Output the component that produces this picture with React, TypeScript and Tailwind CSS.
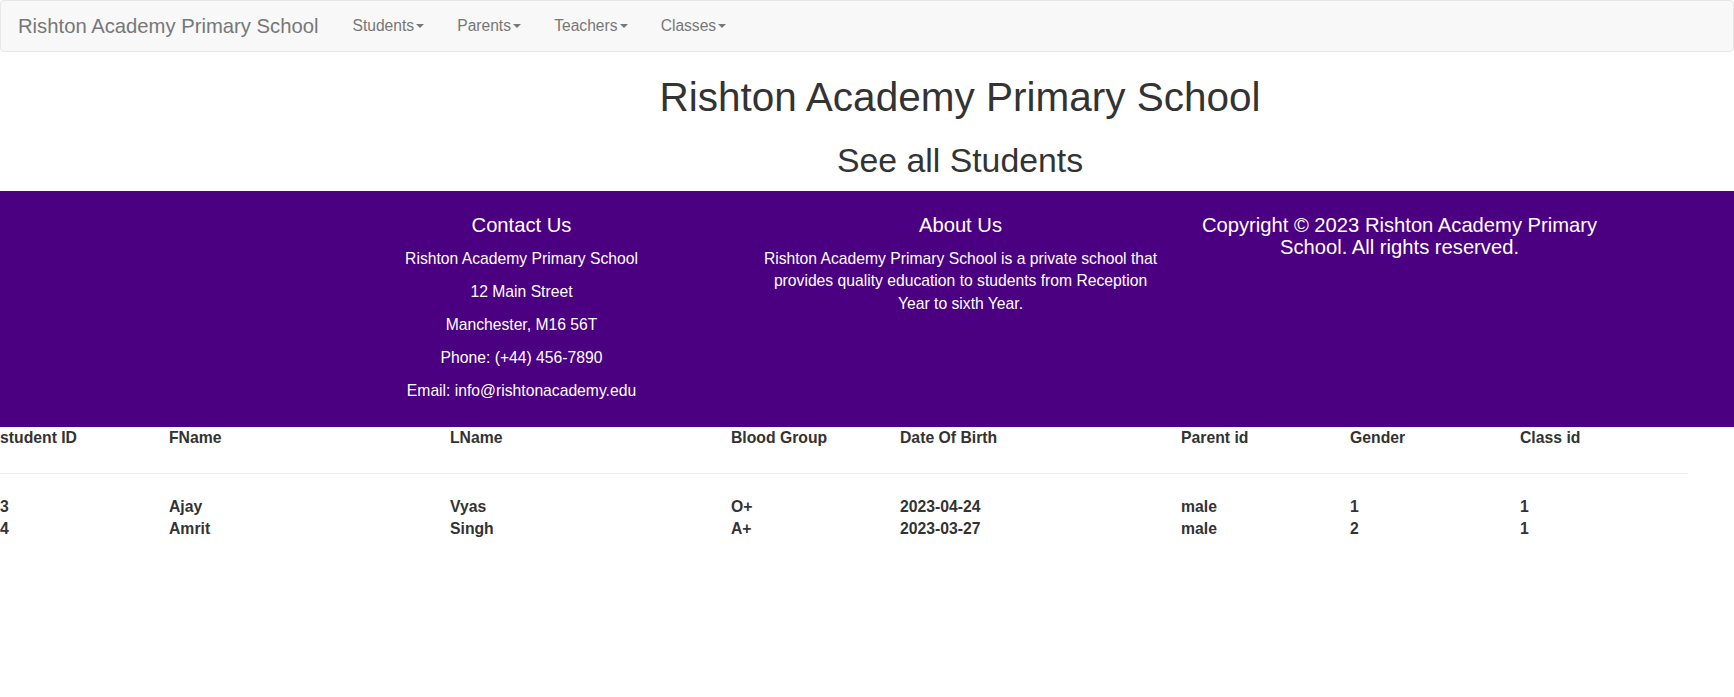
import React from "react";

const navItems = ["Students", "Parents", "Teachers", "Classes"];

const headers = ["student ID", "FName", "LName", "Blood Group", "Date Of Birth", "Parent id", "Gender", "Class id"];
const rows = [
  ["3", "Ajay", "Vyas", "O+", "2023-04-24", "male", "1", "1"],
  ["4", "Amrit", "Singh", "A+", "2023-03-27", "male", "2", "1"],
];

const cols = "grid grid-cols-[169px_281px_281px_169px_281px_169px_170px_168px] w-[1688px]";

export default function App() {
  return (
    <div className="min-h-[697px] bg-white text-[#333] font-['Liberation_Sans',Arial,sans-serif]">
      {/* Navbar */}
      <nav className="h-[52px] w-full bg-[#f8f8f8] border border-[#e7e7e7] rounded-[4px] flex items-center">
        <div className="pl-[17px] pr-[34px] text-[20.25px] leading-[22px] text-[#777]">Rishton Academy Primary School</div>
        <div className="flex items-center">
          {navItems.map((n) => (
            <div key={n} className="px-[16.5px] text-[15.6px] leading-[22px] text-[#777] flex items-center first:pl-0">
              <span>{n}</span>
              <span className="ml-[2.2px] inline-block w-0 h-0 border-t-[4.4px] border-t-[#777] border-l-[4.4px] border-l-transparent border-r-[4.4px] border-r-transparent" />
            </div>
          ))}
        </div>
      </nav>

      {/* Titles */}
      <div className="pl-[186px] text-center">
        <h1 className="mt-[24px] text-[40.5px] leading-[43.56px] font-normal">Rishton Academy Primary School</h1>
        <h2 className="mt-[22px] mb-[13px] text-[33.8px] leading-[36.3px] font-normal">See all Students</h2>
      </div>

      {/* Footer */}
      <footer className="bg-[#4b0082] text-white pt-[24px] pb-[14px]">
        <div className="ml-[302px] w-[1317px] grid grid-cols-3">
          <div className="px-[15px] text-center">
            <h4 className="text-[20.2px] leading-[21.8px] mb-[11px]">Contact Us</h4>
            <p className="text-[15.7px] leading-[22px] mb-[11px]">Rishton Academy Primary School</p>
            <p className="text-[15.7px] leading-[22px] mb-[11px]">12 Main Street</p>
            <p className="text-[15.7px] leading-[22px] mb-[11px]">Manchester, M16 56T</p>
            <p className="text-[15.7px] leading-[22px] mb-[11px]">Phone: (+44) 456-7890</p>
            <p className="text-[15.7px] leading-[22px] mb-[11px]">Email: info@rishtonacademy.edu</p>
          </div>
          <div className="px-[15px] text-center">
            <h4 className="text-[20.2px] leading-[21.8px] mb-[11px]">About Us</h4>
            <p className="px-[5px] text-[15.7px] leading-[22.5px]">
              Rishton Academy Primary School is a private school that provides quality education to students from Reception Year to sixth Year.
            </p>
          </div>
          <div className="px-[15px] text-center">
            <h4 className="text-[20.2px] leading-[21.8px]">Copyright © 2023 Rishton Academy Primary School. All rights reserved.</h4>
          </div>
        </div>
      </footer>

      {/* Table */}
      <div className="w-[1688px] text-[15.75px] leading-[22px] font-bold text-[#333]">
        <div className={`${cols} h-[47px] border-b border-[#eee]`}>
          {headers.map((h) => (
            <div key={h}>{h}</div>
          ))}
        </div>
        <div className="pt-[22px]">
          {rows.map((r, i) => (
            <div key={i} className={`${cols} h-[22px] leading-[22px]`}>
              {r.map((c, j) => (
                <div key={j}>{c}</div>
              ))}
            </div>
          ))}
        </div>
      </div>
    </div>
  );
}
